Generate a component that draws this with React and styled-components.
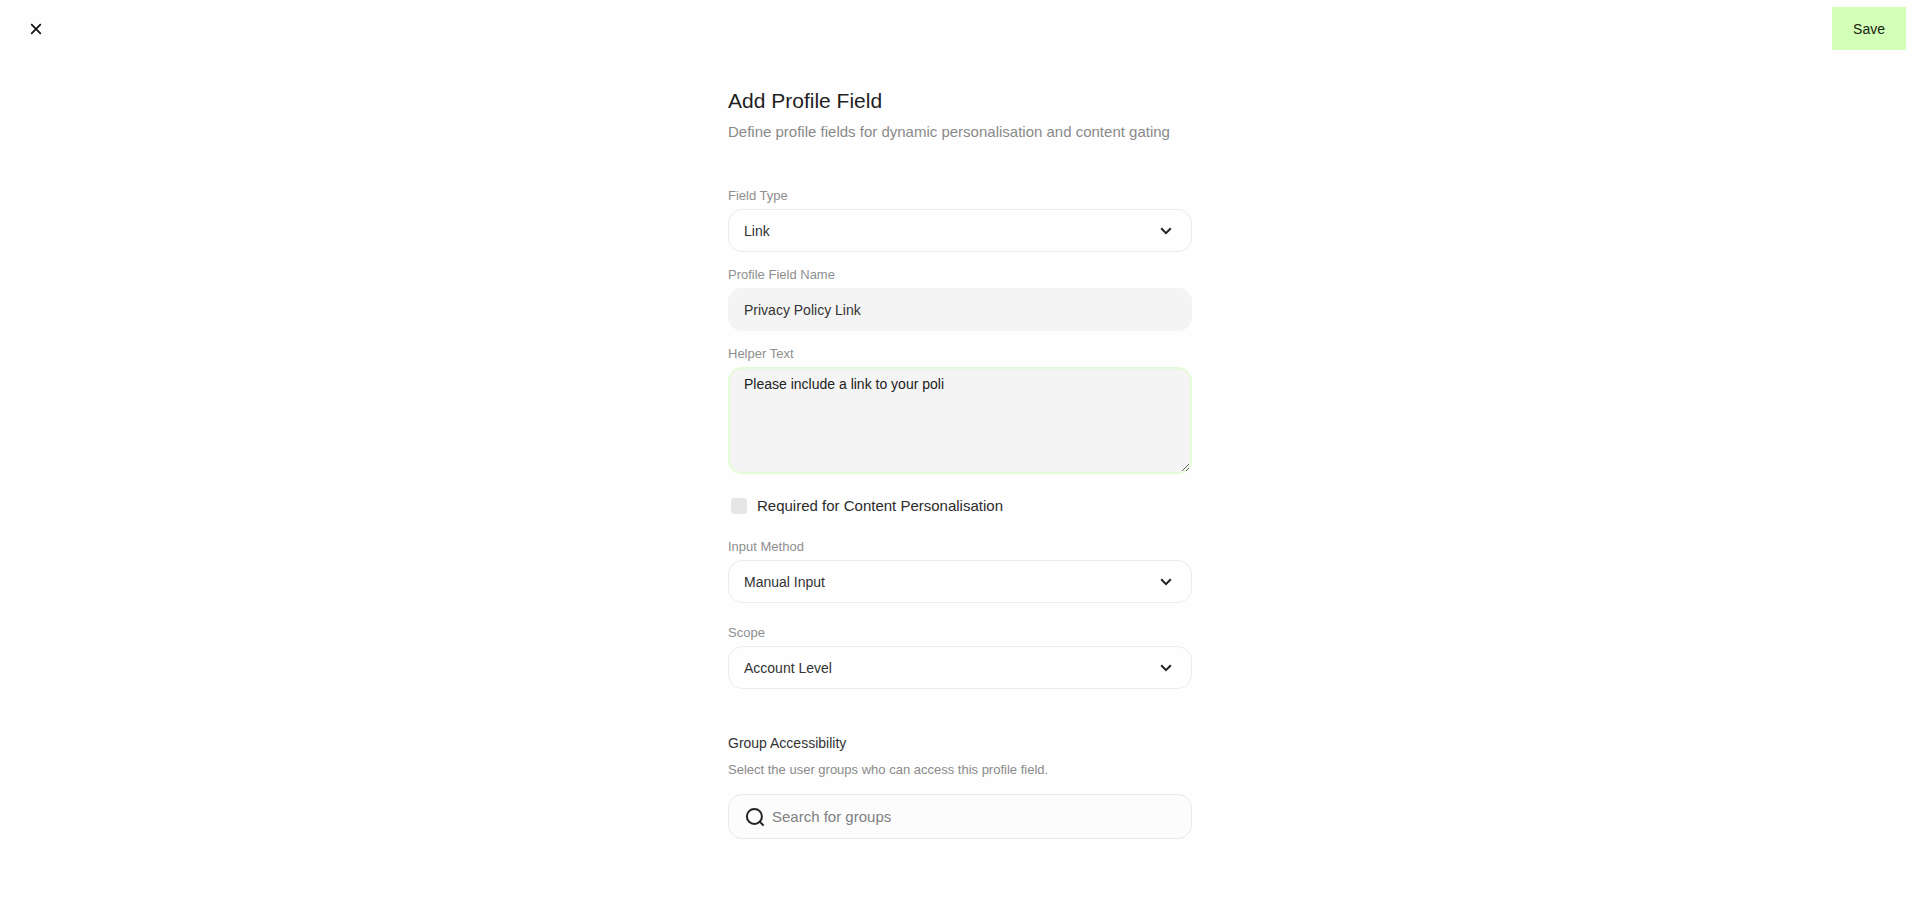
import React, { useState } from "react";
import styled, { createGlobalStyle } from "styled-components";

function SelectField({ id, label, options }) {
  return (
    <FieldStyled>
      <Label htmlFor={id}>{label}</Label>
      <SelectWrap>
        <Select id={id} defaultValue={options[0]}>
          {options.map((option) => (
            <option key={option}>{option}</option>
          ))}
        </Select>
        <svg width="12" height="8" viewBox="0 0 12 8" aria-hidden="true">
          <path d="M1.2 1.2 L6 6.1 L10.8 1.2" />
        </svg>
      </SelectWrap>
    </FieldStyled>
  );
}

function App() {
  const [name, setName] = useState("Privacy Policy Link");
  const [helper, setHelper] = useState("Please include a link to your poli");

  return (
    <PageStyled>
      <GlobalStyle />
      <Header>
        <CloseButton type="button" aria-label="Close">
          <svg width="12" height="12" viewBox="0 0 12 12" aria-hidden="true">
            <path d="M1.2 1.2 L10.8 10.8 M10.8 1.2 L1.2 10.8" />
          </svg>
        </CloseButton>
        <SaveButton type="submit" form="profile-field">
          Save
        </SaveButton>
      </Header>
      <FormStyled id="profile-field" onSubmit={(e) => e.preventDefault()}>
        <Intro>
          <h1>Add Profile Field</h1>
          <p>Define profile fields for dynamic personalisation and content gating</p>
        </Intro>
        <FieldGroup>
          <SelectField
            id="field-type"
            label="Field Type"
            options={["Link", "Text", "Number"]}
          />
          <FieldStyled>
            <Label htmlFor="field-name">Profile Field Name</Label>
            <TextInput
              id="field-name"
              type="text"
              value={name}
              onChange={(e) => setName(e.target.value)}
            />
          </FieldStyled>
          <FieldStyled>
            <Label htmlFor="helper-text">Helper Text</Label>
            <TextArea
              id="helper-text"
              spellCheck={false}
              value={helper}
              onChange={(e) => setHelper(e.target.value)}
            />
          </FieldStyled>
        </FieldGroup>
        <CheckRow>
          <input type="checkbox" />
          Required for Content Personalisation
        </CheckRow>
        <FieldGroup $loose>
          <SelectField
            id="input-method"
            label="Input Method"
            options={["Manual Input", "Automatic"]}
          />
          <SelectField
            id="scope"
            label="Scope"
            options={["Account Level", "User Level"]}
          />
        </FieldGroup>
        <GroupSection>
          <h2>Group Accessibility</h2>
          <p>Select the user groups who can access this profile field.</p>
          <SearchBox>
            <svg width="20" height="20" viewBox="0 0 20 20" aria-hidden="true">
              <circle cx="9.4" cy="9.4" r="7.5" />
              <path d="M14.4 14.4 L18.6 18.6" />
            </svg>
            <input
              type="search"
              placeholder="Search for groups"
              aria-label="Search for groups"
            />
          </SearchBox>
        </GroupSection>
      </FormStyled>
    </PageStyled>
  );
}

const GlobalStyle = createGlobalStyle`
  * {
    box-sizing: border-box;
    margin: 0;
    padding: 0;
  }
  body {
    background: #fefefe;
    color: #2b2b2b;
  }
  body, button, input, select, textarea {
    font-family: "Liberation Sans", Arial, sans-serif;
    font-size: 14px;
  }
`;

const PageStyled = styled.main`
  min-height: 100vh;
  background: #fefefe;
`;

const Header = styled.header`
  display: flex;
  align-items: center;
  justify-content: space-between;
  padding: 7px 14px 7px 24px;
`;

const CloseButton = styled.button`
  display: flex;
  align-items: center;
  justify-content: center;
  width: 24px;
  height: 24px;
  border: none;
  background: none;
  cursor: pointer;
  svg {
    fill: none;
    stroke: #111;
    stroke-width: 1.7;
  }
`;

const SaveButton = styled.button`
  height: 43px;
  padding: 0 21px;
  border: none;
  background: #d3ffb8;
  color: #17240f;
  cursor: pointer;
`;

const FormStyled = styled.form`
  width: 100%;
  max-width: 464px;
  margin: 0 auto;
  padding: 30px 0 64px;
`;

const Intro = styled.div`
  margin-bottom: 46px;
  h1 {
    font-size: 21px;
    font-weight: 400;
    line-height: 28px;
    color: #1f1f1f;
  }
  p {
    margin-top: 7px;
    font-size: 15px;
    line-height: 20px;
    color: #8a8a8a;
  }
`;

const FieldGroup = styled.div`
  display: flex;
  flex-direction: column;
  gap: ${({ $loose }) => ($loose ? "22px" : "15px")};
`;

const FieldStyled = styled.div`
  display: flex;
  flex-direction: column;
  gap: 5px;
`;

const Label = styled.label`
  font-size: 13px;
  line-height: 16px;
  color: #8f8f8f;
`;

const SelectWrap = styled.div`
  display: grid;
  align-items: center;
  select,
  svg {
    grid-area: 1 / 1;
  }
  svg {
    justify-self: end;
    margin-right: 20px;
    fill: none;
    stroke: #222;
    stroke-width: 2;
    pointer-events: none;
  }
`;

const Select = styled.select`
  width: 100%;
  height: 43px;
  padding: 0 15px;
  border: 1px solid #ececec;
  border-radius: 14px;
  background: #fefefe;
  color: #333;
  appearance: none;
`;

const TextInput = styled.input`
  width: 100%;
  height: 43px;
  padding: 0 16px;
  border: none;
  border-radius: 14px;
  background: #f4f4f4;
  color: #333;
`;

const TextArea = styled.textarea`
  display: block;
  width: 100%;
  height: 107px;
  padding: 6px 14px;
  border: 2px solid #e4fcd6;
  border-radius: 14px;
  background: #f4f4f4;
  color: #222;
  line-height: 18px;
  outline: none;
  resize: vertical;
`;

const CheckRow = styled.label`
  display: flex;
  align-items: center;
  gap: 10px;
  margin: 22px 0 23px;
  padding-left: 3px;
  font-size: 15px;
  line-height: 20px;
  input {
    width: 16px;
    height: 16px;
    border-radius: 3px;
    background: #e6e6e6;
    appearance: none;
    &:checked {
      background: #d3ffb8;
    }
  }
`;

const GroupSection = styled.section`
  margin-top: 44px;
  h2 {
    font-size: 14px;
    font-weight: 400;
    line-height: 20px;
    color: #333;
  }
  p {
    margin: 8px 0 15px;
    font-size: 13px;
    line-height: 18px;
    color: #8a8a8a;
  }
`;

const SearchBox = styled.div`
  display: flex;
  align-items: center;
  gap: 7px;
  height: 45px;
  padding: 0 16px;
  border: 1px solid #e9e9e9;
  border-radius: 14px;
  background: #fcfcfc;
  svg {
    flex: none;
    fill: none;
    stroke: #222;
    stroke-width: 2;
  }
  input {
    flex: 1;
    min-width: 0;
    border: none;
    background: none;
    font-size: 15px;
    outline: none;
    &::placeholder {
      color: #808080;
    }
  }
`;

export default App;
